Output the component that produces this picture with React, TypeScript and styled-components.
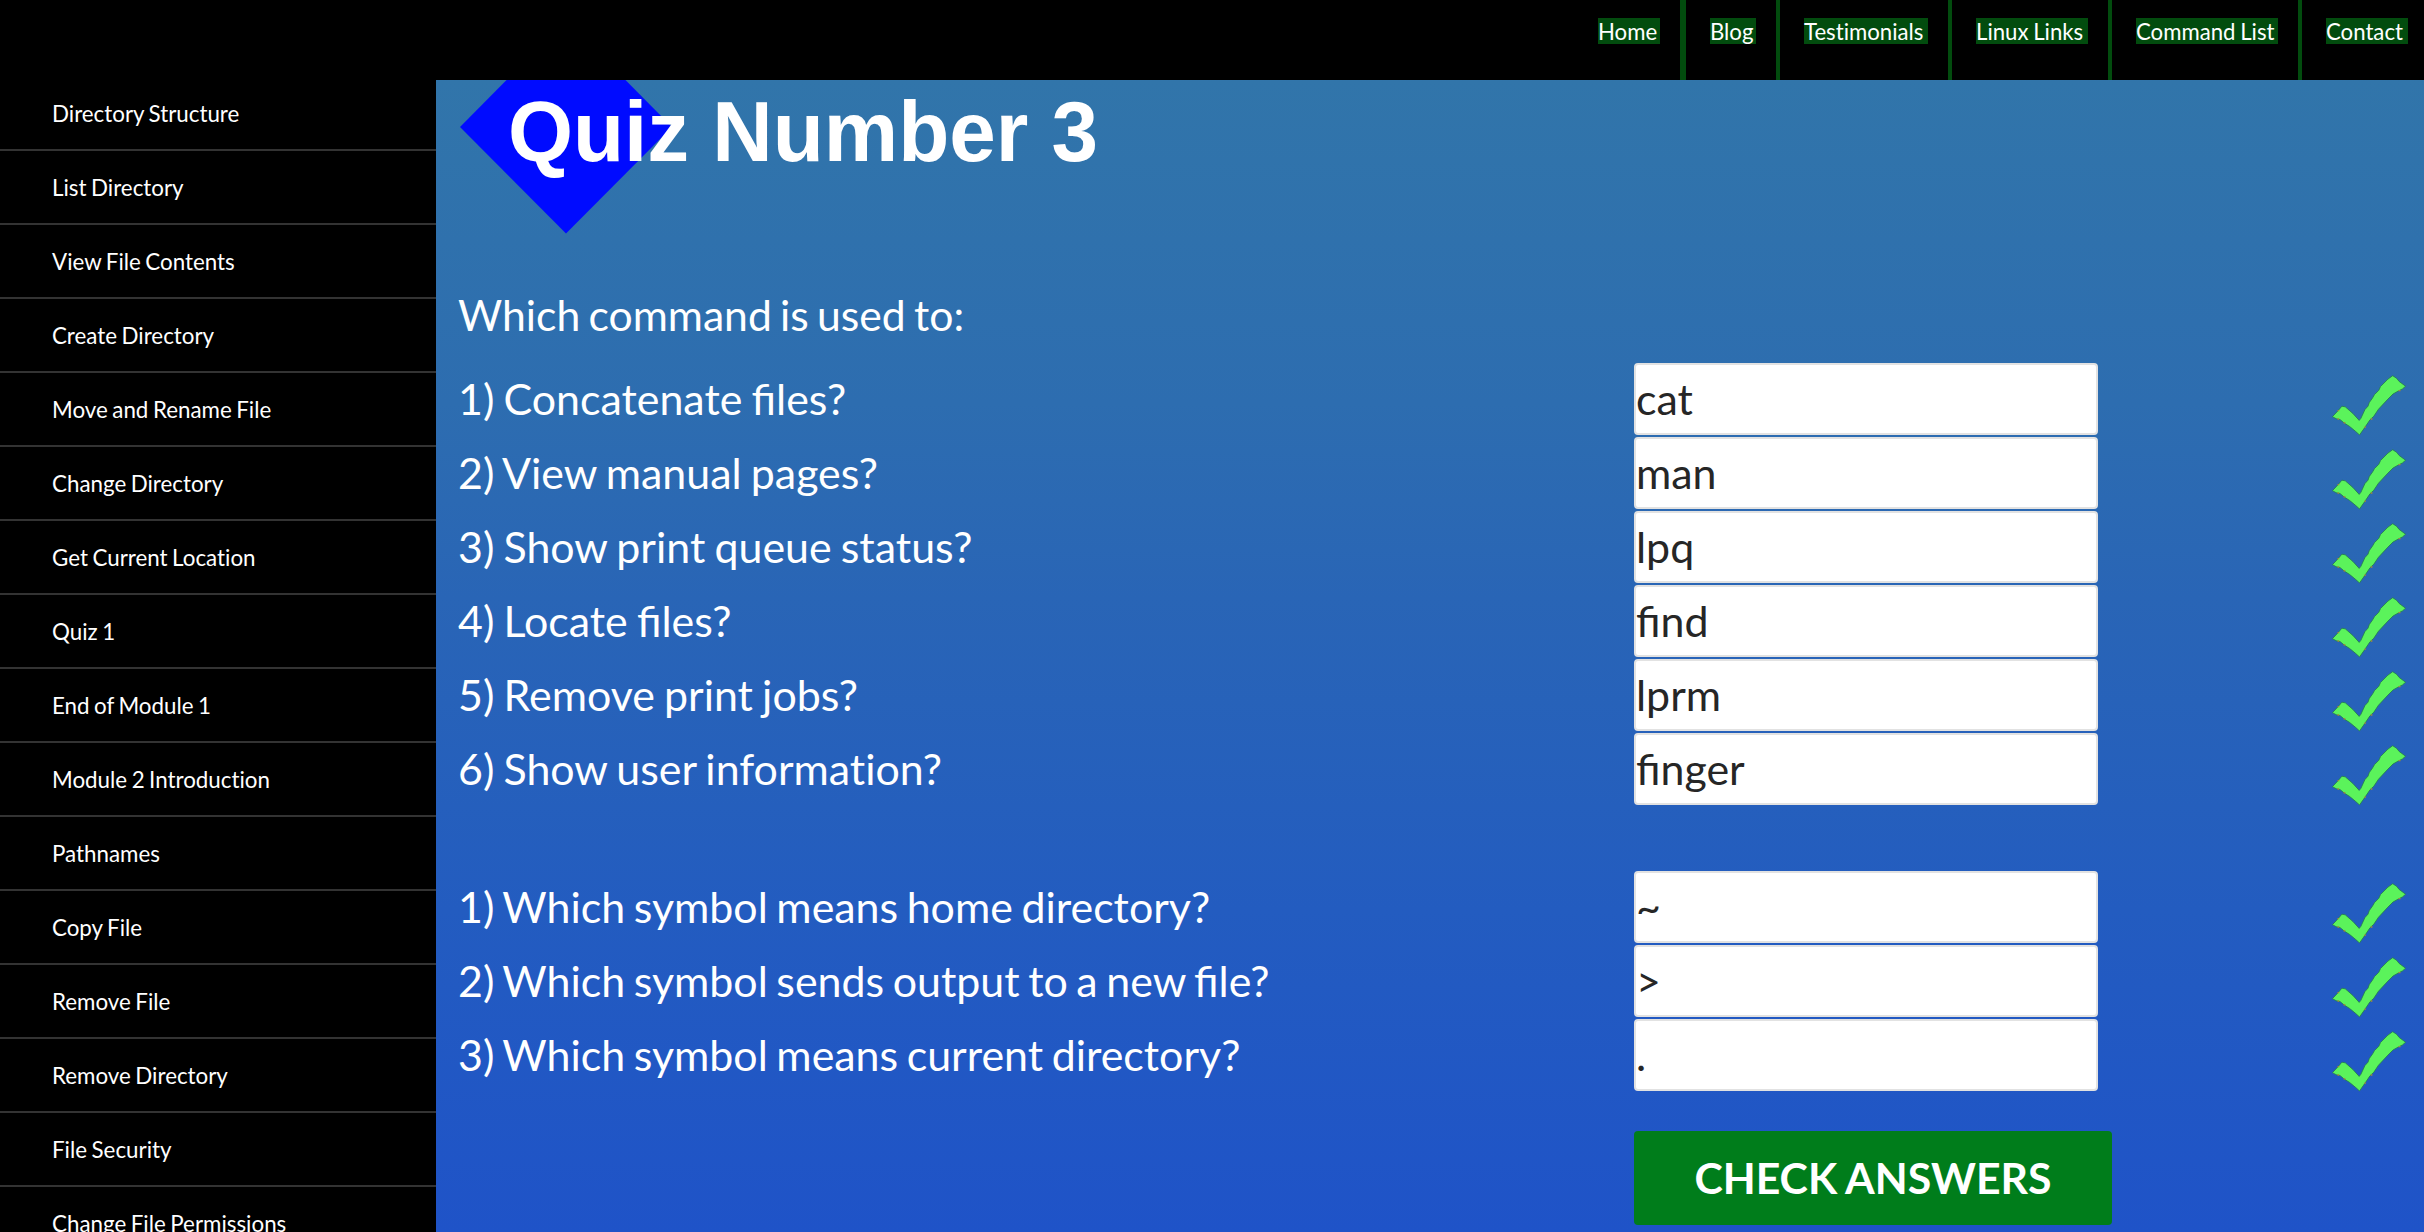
import React from "react";
import styled, { createGlobalStyle } from "styled-components";

const GlobalStyle = createGlobalStyle`
  *, *::before, *::after { box-sizing: border-box; }
  body {
    margin: 0;
    background: #000;
    font-family: Lato, "Liberation Sans", sans-serif;
    overflow: hidden;
  }
`;

const Page = styled.div`
  display: grid;
  grid-template-columns: 436px 1fr;
  grid-template-rows: 80px 1152px;
  width: 2424px;
  height: 1232px;
  overflow: hidden;
  background: #000;
`;

const TopBar = styled.nav`
  grid-column: 1 / -1;
  display: flex;
  justify-content: flex-end;
  padding-right: 16px;
`;

const NavItem = styled.div<{ $width: number; $divider: number }>`
  width: ${(p) => p.$width}px;
  height: 80px;
  padding: 18px 0 0 24px;
  border-left: ${(p) => p.$divider}px solid #024c0e;
`;

const NavLink = styled.a<{ $width: number }>`
  display: block;
  width: ${(p) => p.$width}px;
  height: 26px;
  line-height: 28px;
  font-size: 22.2px;
  word-spacing: -1px;
  font-variant-ligatures: none;
  white-space: nowrap;
  color: #fff;
  background: #024c0e;
`;

const Sidebar = styled.aside`
  overflow: hidden;
`;

const SideLink = styled.a<{ $first?: boolean }>`
  display: block;
  height: ${(p) => (p.$first ? 71 : 74)}px;
  padding: ${(p) => (p.$first ? 20 : 23)}px 0 0 52px;
  border-bottom: 2px solid #333;
  font-size: 22.35px;
  line-height: 28px;
  word-spacing: -1.2px;
  font-variant-ligatures: none;
  color: #fff;
`;

const Main = styled.main`
  overflow: hidden;
  padding-left: 22px;
  background: linear-gradient(#3175aa, #2d6db0 28%, #2965b6 45%, #235cc0 72%, #1f53c8);
  color: #fff;
`;

const Banner = styled.svg`
  display: block;
  width: 700px;
  height: 190px;
`;

const Intro = styled.p`
  margin: 16px 0 0;
  font-size: 42.7px;
  line-height: 58px;
  word-spacing: -2.7px;
`;

const Group = styled.section<{ $top: number }>`
  display: flex;
  flex-direction: column;
  gap: 2px;
  margin-top: ${(p) => p.$top}px;
`;

const Row = styled.div`
  display: grid;
  grid-template-columns: 1176px 464px 1fr;
  height: 72px;
  padding-right: 17px;
`;

const Question = styled.label<{ $ligatures: boolean; $spacing: number }>`
  font-size: 42.9px;
  line-height: 72px;
  word-spacing: ${(p) => p.$spacing}px;
  font-variant-ligatures: ${(p) => (p.$ligatures ? "normal" : "none")};
  white-space: nowrap;
`;

const Answer = styled.input`
  width: 464px;
  height: 72px;
  padding: 0 0 2px;
  border: 2px solid #e2e2e2;
  border-radius: 4px;
  outline: none;
  background: #fff;
  color: #262626;
  font-family: inherit;
  font-size: 42.9px;
`;

const Tick = styled.svg`
  justify-self: end;
  width: 76px;
  height: 63px;
  margin-top: 11px;
`;

const CheckButton = styled.button`
  display: block;
  width: 478px;
  height: 94px;
  margin: 40px 0 0 1176px;
  padding: 0 0 2px;
  border: 0;
  border-radius: 4px;
  background: #007d1b;
  color: #fff;
  font-family: inherit;
  font-size: 42.8px;
  font-weight: 700;
  word-spacing: -1.2px;
`;

const nav = [
  { label: "Home", item: 106, link: 62, divider: 0 },
  { label: "Blog", item: 96, link: 46, divider: 6 },
  { label: "Testimonials", item: 172, link: 124, divider: 4 },
  { label: "Linux Links", item: 160, link: 112, divider: 4 },
  { label: "Command List", item: 190, link: 142, divider: 4 },
  { label: "Contact", item: 110, link: 82, divider: 4 },
];

const lessons = [
  "Directory Structure",
  "List Directory",
  "View File Contents",
  "Create Directory",
  "Move and Rename File",
  "Change Directory",
  "Get Current Location",
  "Quiz 1",
  "End of Module 1",
  "Module 2 Introduction",
  "Pathnames",
  "Copy File",
  "Remove File",
  "Remove Directory",
  "File Security",
  "Change File Permissions",
];

const commands: [string, string][] = [
  ["1) Concatenate files?", "cat"],
  ["2) View manual pages?", "man"],
  ["3) Show print queue status?", "lpq"],
  ["4) Locate files?", "find"],
  ["5) Remove print jobs?", "lprm"],
  ["6) Show user information?", "finger"],
];

const symbols: [string, string][] = [
  ["1) Which symbol means home directory?", "~"],
  ["2) Which symbol sends output to a new file?", ">"],
  ["3) Which symbol means current directory?", "."],
];

const TickIcon = () => (
  <Tick viewBox="66 42 222 186" aria-label="Correct">
    <path
      d="M69 168 85 151 97 137 107 139 130 159 148 179 153 173 165 147 174 137 178 126 188 112 193 103 206 90 211 79 233 57 247 47 259 55 266 64 285 78 276 86 264 92 248 101 233 116 205 146 191 167 180 177 166 198 149 222 138 212 120 197 104 187 92 177 80 174Z"
      fill="#5bf35b"
      stroke="#257c50"
      strokeWidth="2.5"
      strokeLinejoin="round"
    />
    <path
      d="M84 150h5M84 175h5M102 186h5M163 199h5M182 175h5M264 91h6"
      stroke="#a5873f"
      strokeWidth="4"
    />
  </Tick>
);

const Rows = ({ items, spacing }: { items: [string, string][]; spacing: number }) => (
  <>
    {items.map(([question, answer]) => (
      <Row key={question}>
        <Question $ligatures={question.includes("fi")} $spacing={spacing}>
          {question}
        </Question>
        <Answer defaultValue={answer} spellCheck={false} />
        <TickIcon />
      </Row>
    ))}
  </>
);

export default function App() {
  return (
    <>
      <GlobalStyle />
      <Page>
        <TopBar>
          {nav.map((n) => (
            <NavItem key={n.label} $width={n.item} $divider={n.divider}>
              <NavLink $width={n.link}>{n.label}</NavLink>
            </NavItem>
          ))}
        </TopBar>
        <Sidebar>
          {lessons.map((lesson, i) => (
            <SideLink key={lesson} $first={i === 0}>
              {lesson}
            </SideLink>
          ))}
        </Sidebar>
        <Main>
          <Banner viewBox="458 80 700 190">
            <path d="M460 127 566 20 672 127 566 233.500Z" fill="#000bff" />
            <text
              x="508"
              y="160.500"
              fill="#fff"
              fontFamily="Liberation Sans, Arial, sans-serif"
              fontWeight="700"
              fontSize="86"
              textLength="590"
              lengthAdjust="spacingAndGlyphs"
            >
              Quiz Number 3
            </text>
          </Banner>
          <Intro>Which command is used to:</Intro>
          <Group $top={19}>
            <Rows items={commands} spacing={-1.8} />
          </Group>
          <Group $top={66}>
            <Rows items={symbols} spacing={-2.4} />
          </Group>
          <CheckButton>CHECK ANSWERS</CheckButton>
        </Main>
      </Page>
    </>
  );
}
